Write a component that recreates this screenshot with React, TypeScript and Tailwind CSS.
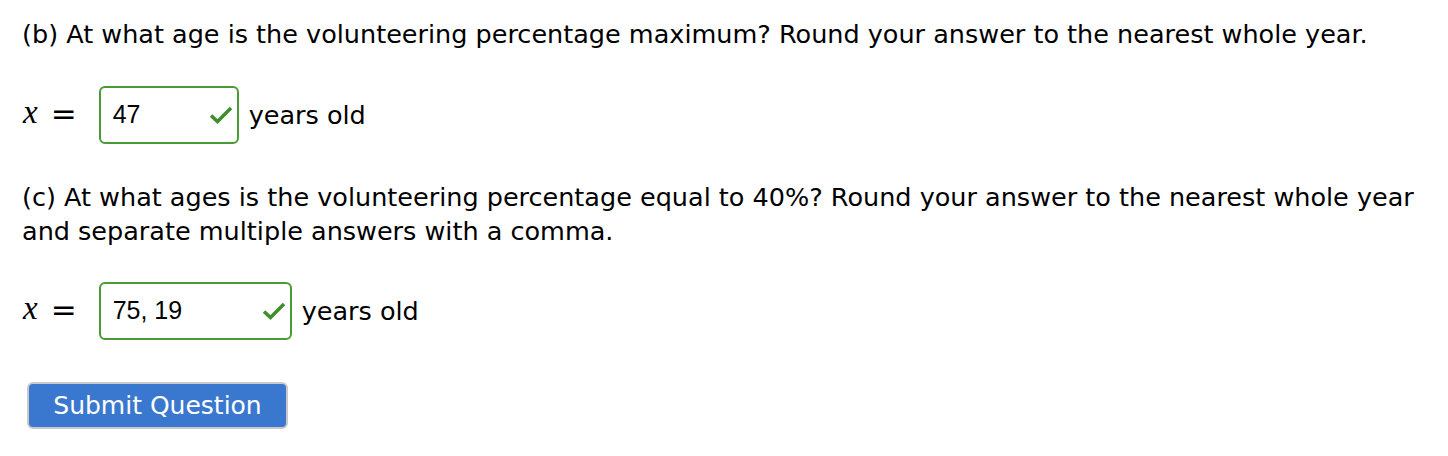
function Check() {
  return (
    <svg width="24" height="18" viewBox="0 0 24 18" fill="none">
      <path d="M2 9.5 L8.5 15.5 L22 2" stroke="#3f8f2f" strokeWidth="3.6" strokeLinejoin="miter" />
    </svg>
  );
}

function AnswerRow({ value, width }: { value: string; width: string }) {
  return (
    <div className="flex items-center h-[58px]">
      <span className="ml-px pb-[6px] font-['Liberation_Serif',serif] italic text-[33px] leading-none">x</span>
      <span className="ml-[13px] pb-[4px] font-['DejaVu_Sans',sans-serif] text-[31px] leading-none">=</span>
      <div
        className={`ml-[22px] ${width} h-[58px] border-2 border-[#4a9a35] rounded-[6px] flex items-center justify-between pl-[12px] pr-[4px]`}
      >
        <span className="font-['Liberation_Sans',sans-serif] text-[25px] leading-none pb-[2px]">{value}</span>
        <Check />
      </div>
      <span className="ml-[10px]">years old</span>
    </div>
  );
}

export default function App() {
  return (
    <div className="px-[22px] pt-[17px] font-['DejaVu_Sans',sans-serif] text-[25.5px] leading-[34px] text-black bg-white min-h-[456px]">
      <p>(b) At what age is the volunteering percentage maximum? Round your answer to the nearest whole year.</p>

      <div className="mt-[35px]">
        <AnswerRow value="47" width="w-[140px]" />
      </div>

      <p className="mt-[36px]">
        (c) At what ages is the volunteering percentage equal to 40%? Round your answer to the nearest whole year
        <br />
        and separate multiple answers with a comma.
      </p>

      <div className="mt-[34px]">
        <AnswerRow value="75, 19" width="w-[193px]" />
      </div>

      <button className="mt-[42px] ml-[5px] w-[261px] h-[47px] rounded-[6px] border-2 border-[#c9c9c9] bg-[#3a78cf] text-white text-[25px] leading-none">
        Submit Question
      </button>
    </div>
  );
}
